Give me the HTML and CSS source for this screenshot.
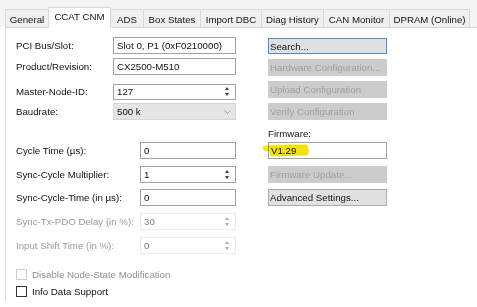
FILE: index.html
```html
<!DOCTYPE html>
<html>
<head>
<meta charset="utf-8">
<link rel="stylesheet" href="styles.css">
</head>
<body>
<div class="window">
  <div class="tabs">
    <div class="tab w-general">General</div>
    <div class="tab sel w-ccat">CCAT CNM</div>
    <div class="tab w-ads">ADS</div>
    <div class="tab w-box">Box States</div>
    <div class="tab w-dbc">Import DBC</div>
    <div class="tab w-diag">Diag History</div>
    <div class="tab w-can">CAN Monitor</div>
    <div class="tab w-dpram">DPRAM (Online)</div>
  </div>
  <div class="panel">
    <div class="left">
      <div class="row r1 narrow"><span class="lbl">PCI Bus/Slot:</span><div class="field"><span class="val">Slot 0, P1 (0xF0210000)</span></div></div>
      <div class="row r2 narrow"><span class="lbl">Product/Revision:</span><div class="field"><span class="val">CX2500-M510</span></div></div>
      <div class="row r3 narrow"><span class="lbl">Master-Node-ID:</span><div class="field"><span class="val">127</span><div class="spin"><i class="up"></i><i class="dn"></i></div></div></div>
      <div class="row r4 narrow"><span class="lbl">Baudrate:</span><div class="field combo"><span class="val">500 k</span><svg class="chev" width="7" height="4" viewBox="0 0 7 4"><path d="M0.5 0.5 L3.5 3.3 L6.5 0.5" fill="none" stroke="#8a8a8a" stroke-width="0.8"/></svg></div></div>
      <div class="row r5 wide"><span class="lbl">Cycle Time (µs):</span><div class="field"><span class="val">0</span></div></div>
      <div class="row r6 wide"><span class="lbl">Sync-Cycle Multiplier:</span><div class="field"><span class="val">1</span><div class="spin"><i class="up"></i><i class="dn"></i></div></div></div>
      <div class="row r7 wide"><span class="lbl">Sync-Cycle-Time (in µs):</span><div class="field"><span class="val">0</span></div></div>
      <div class="row r8 wide dis"><span class="lbl">Sync-Tx-PDO Delay (in %):</span><div class="field"><span class="val">30</span><div class="spin"><i class="up"></i><i class="dn"></i></div></div></div>
      <div class="row r9 wide dis"><span class="lbl">Input Shift Time (in %):</span><div class="field"><span class="val">0</span><div class="spin"><i class="up"></i><i class="dn"></i></div></div></div>
      <div class="check c1 dis"><span class="box"></span><span>Disable Node-State Modification</span></div>
      <div class="check c2"><span class="box"></span><span>Info Data Support</span></div>
    </div>
    <div class="right">
      <div class="btn focus b1">Search...</div>
      <div class="btn off b2">Hardware Configuration...</div>
      <div class="btn off b3">Upload Configuration</div>
      <div class="btn off b4">Verify Configuration</div>
      <div class="fwlabel">Firmware:</div>
      <div class="field fw">
        <span class="val">V1.29</span>
        <svg class="mark" width="50" height="16" viewBox="0 0 50 16"><path d="M0 3.5 L7 2.2 L44 1.5 Q47 6 45 12.5 L8 13.5 L6.5 8 L0.5 7.5 Z" fill="#f4e20e"/></svg>
      </div>
      <div class="btn off b5">Firmware Update...</div>
      <div class="btn b6">Advanced Settings...</div>
    </div>
  </div>
</div>
</body>
</html>
```

FILE: styles.css
```css
* { box-sizing: border-box; }
html, body { margin: 0; padding: 0; }
body {
  width: 477px;
  height: 307px;
  overflow: hidden;
  background: #ffffff;
  font-family: "Liberation Sans", Arial, sans-serif;
  font-size: 9.7px;
  color: #111;
}
.window { width: 477px; height: 307px; }
.tabs {
  height: 27px;
  background: #f4f4f4;
  display: flex;
  align-items: flex-end;
  padding-left: 5px;
  position: relative;
  z-index: 1;
}
.tab {
  height: 18px;
  border: 1px solid #d9d9d9;
  border-bottom: none;
  margin-left: -1px;
  background: #f0f0f0;
  display: flex;
  align-items: center;
  justify-content: center;
  padding-top: 1px;
  white-space: nowrap;
}
.tab:first-child { margin-left: 0; }
.tab.sel {
  height: 21px;
  margin-bottom: -1px;
  background: #ffffff;
  padding-top: 0;
  padding-bottom: 3px;
  position: relative;
  z-index: 2;
  border-bottom: none;
}
.w-general { width: 44px; }
.w-ccat { width: 63px; }
.w-ads { width: 34px; }
.w-box { width: 58px; }
.w-dbc { width: 62px; }
.w-diag { width: 63px; }
.w-can { width: 67px; }
.w-dpram { width: 81px; }
.panel {
  margin-left: 5px;
  height: 273px;
  border-left: 1px solid #d9d9d9;
  border-top: 1px solid #d9d9d9;
  background: #fff;
  display: flex;
  padding: 9px 0 0 10px;
  gap: 32px;
}
.left { width: 220px; display: flex; flex-direction: column; }
.row {
  height: 17px;
  display: grid;
  align-items: center;
}
.row.narrow { grid-template-columns: 97px 123px; }
.row.wide { grid-template-columns: 124px 96px; }
.lbl { white-space: nowrap; }
.field {
  height: 17px;
  border: 1px solid #a2a2a2;
  background: #fff;
  display: flex;
  align-items: center;
  padding-left: 3px;
  white-space: nowrap;
  position: relative;
}
.val { flex: 1; }
.r2 { margin-top: 4px; }
.r3 { margin-top: 8px; }
.r3 .field { height: 16px; }
.r4 { margin-top: 3px; }
.r5 { margin-top: 22px; }
.r6 { margin-top: 7px; }
.r7 { margin-top: 6px; }
.r8 { margin-top: 7px; }
.r9 { margin-top: 7px; }
.combo { background: #e5e5e5; border-color: #d6d6d6; }
.chev { margin-right: 4px; }
.spin {
  width: 17px;
  height: 100%;
  display: flex;
  flex-direction: column;
  align-items: center;
  justify-content: center;
  gap: 3px;
}
.spin i {
  display: block;
  width: 0; height: 0;
  border-left: 2.5px solid transparent;
  border-right: 2.5px solid transparent;
}
.spin .up { border-bottom: 3px solid #3c3c3c; }
.spin .dn { border-top: 3px solid #3c3c3c; }
.dis { color: #9a9a9a; }
.dis .field { border-color: #ececec; color: #7a7a7a; }
.dis .lbl { color: #9a9a9a; }
.dis .spin .up { border-bottom-color: #a8a8a8; }
.dis .spin .dn { border-top-color: #a8a8a8; }
.check {
  display: flex;
  align-items: center;
  gap: 5px;
  height: 11px;
}
.check .box {
  width: 11px;
  height: 11px;
  border: 1px solid #333;
  background: #fff;
}
.check.dis .box { border-color: #cfcfcf; }
.check.dis { color: #8f8f8f; }
.c1 { margin-top: 15px; }
.c2 { margin-top: 6px; }
.right { width: 119px; display: flex; flex-direction: column; padding-top: 1px; }
.btn {
  height: 17px;
  border: 1px solid #adadad;
  background: #e1e1e1;
  display: flex;
  align-items: center;
  padding-left: 1px;
  white-space: nowrap;
}
.btn.focus { border-color: #4f8fd0; }
.btn.off { background: #cccccc; border-color: #cccccc; color: #9f9f9f; }
.b1 { height: 16px; }
.b2 { margin-top: 5px; }
.b3 { margin-top: 5px; }
.b4 { margin-top: 5px; }
.fwlabel { margin-top: 8px; height: 11px; line-height: 11px; }
.fw { margin-top: 3px; padding-left: 2px; }
.fw .val { position: relative; z-index: 2; }
.mark {
  position: absolute;
  left: -6px;
  top: 0px;
  z-index: 1;
  mix-blend-mode: multiply;
}
.b5 { margin-top: 7px; }
.b6 { margin-top: 6px; }
```
